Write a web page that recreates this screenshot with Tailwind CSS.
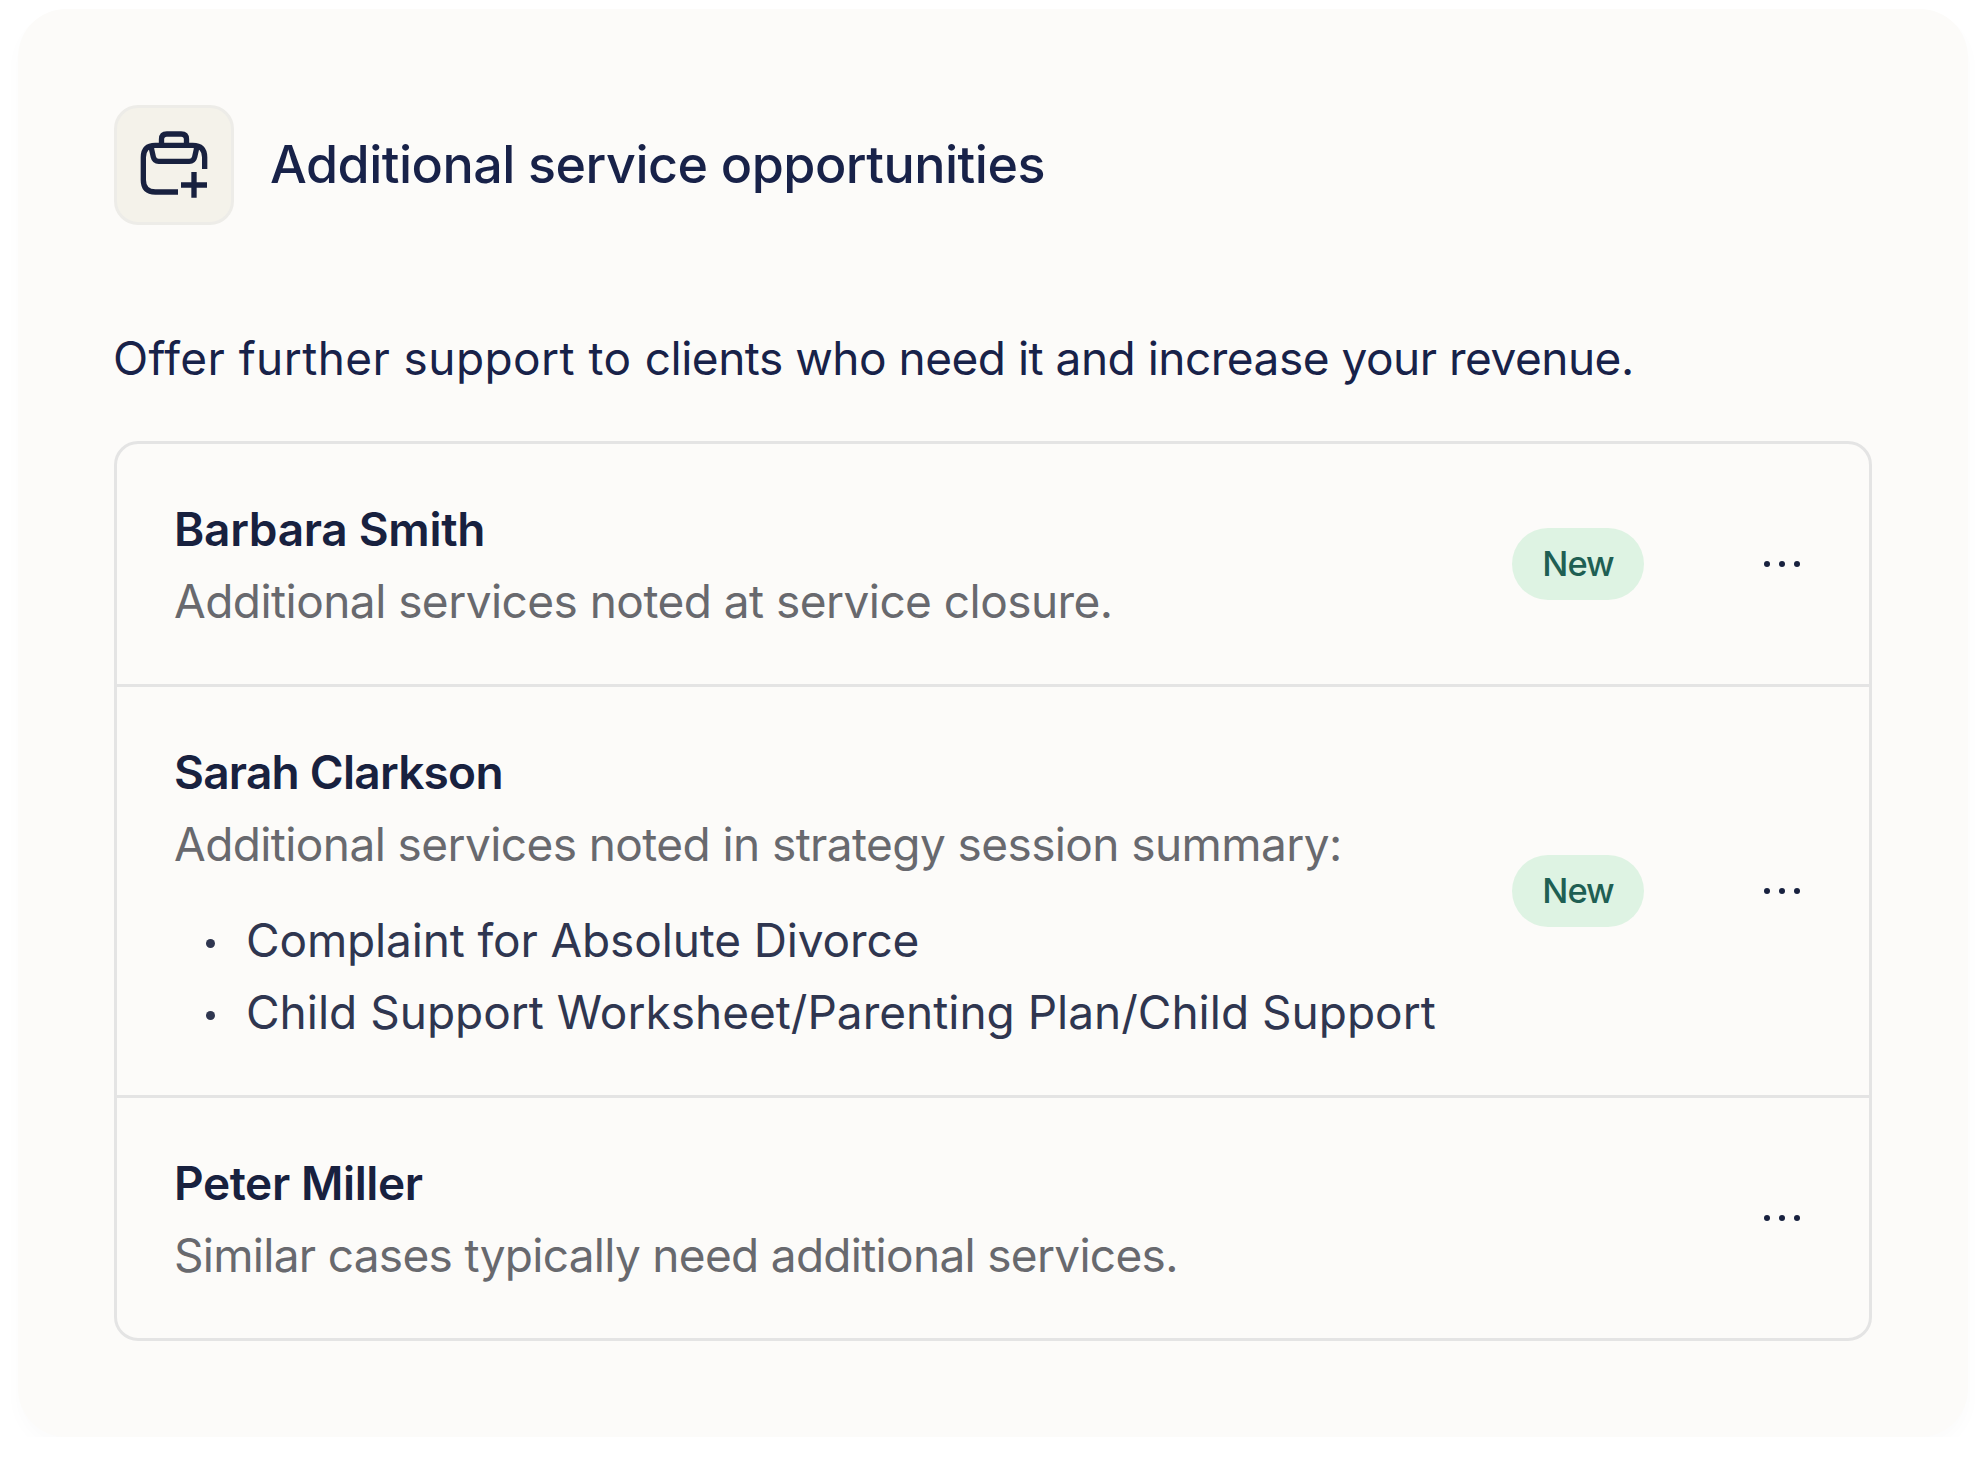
<!DOCTYPE html>
<html lang="en">
<head>
    <meta charset="UTF-8">
    <meta name="viewport" content="width=device-width, initial-scale=1.0">
    <title>Additional service opportunities</title>
    <script src="https://cdn.jsdelivr.net/npm/@tailwindcss/browser@4"></script>
</head>
<body class="bg-white font-['Inter',sans-serif] text-[46px] leading-[72px] text-[#182249]">
    <main class="mx-[18px] mt-[9px] h-[1428px] rounded-[48px] bg-[#fcfbf9] px-24 pt-24 shadow-[0_9px_18px_rgba(24,34,73,0.02)]">
        <!-- Header -->
        <header class="flex items-center gap-9">
            <div class="size-[120px] shrink-0 rounded-3xl border-3 border-[#edece8] bg-[#f4f2ea]">
                <svg class="size-full" viewBox="51 54 342 342" fill="none" stroke="#18213f" stroke-width="16">
                    <path d="M234 306H166Q130 306 130 270V202Q130 166 166 166H278Q314 166 314 202V237" />
                    <path d="M184.500 162V148Q184.500 132 200.500 132H243.500Q259.500 132 259.500 148V162" />
                    <path d="M153 170L160 201Q163 214 176 214H268Q281 214 284 201L291 170" />
                    <path d="M282 246V323M243 285H321" />
                </svg>
            </div>
            <h1 class="text-[52px] font-[450] tracking-[-0.52px] whitespace-nowrap">Additional service opportunities</h1>
        </header>

        <p class="mt-[97px] -ml-px whitespace-nowrap"><span class="tracking-[0.42px]">Offer further support to </span><span class="tracking-[-0.5px]">clients who need it and increase your revenue.</span></p>

        <!-- Clients -->
        <ul class="mt-[47px] divide-y-3 divide-[#e4e4e4] rounded-3xl border-3 border-[#e4e4e4]">
            <li class="flex h-[243px] items-center px-[57px]">
                <div class="flex-1 pt-0.5 whitespace-nowrap">
                    <h2 class="font-semibold tracking-[-0.3px] text-[#18213f]">Barbara Smith</h2>
                    <p class="tracking-[-0.54px] text-[#68696e]">Additional services noted at service closure.</p>
                </div>
                <span class="flex h-[72px] w-[132px] items-center justify-center rounded-full bg-[#def3e3] text-[34.500px] font-medium tracking-[-1px] text-[#1f5f53]">New</span>
                <button class="ml-[108px]" aria-label="More options">
                    <svg class="h-[60px] w-[60px]" viewBox="0 0 60 60" fill="#18213f">
                        <circle cx="15" cy="30" r="3" /><circle cx="30" cy="30" r="3" /><circle cx="45" cy="30" r="3" />
                    </svg>
                </button>
            </li>
            <li class="flex h-[411px] items-center px-[57px]">
                <div class="w-0 flex-1 pt-0.5 whitespace-nowrap">
                    <h2 class="font-semibold tracking-[-0.75px] text-[#18213f]">Sarah Clarkson</h2>
                    <p class="tracking-[-0.59px] text-[#68696e]">Additional services noted in strategy session summary:</p>
                    <ul class="mt-6 text-[#2f3650]">
                        <li class="flex items-center pl-8 tracking-[-0.14px]"><span class="mt-1.5 mr-[31px] size-[9px] rounded-full bg-[#2f3650]"></span>Complaint for Absolute Divorce</li>
                        <li class="flex items-center pl-8"><span class="mt-1.5 mr-[31px] size-[9px] rounded-full bg-[#2f3650]"></span>Child Support Worksheet/Parenting Plan/Child Support</li>
                    </ul>
                </div>
                <span class="flex h-[72px] w-[132px] items-center justify-center rounded-full bg-[#def3e3] text-[34.500px] font-medium tracking-[-1px] text-[#1f5f53]">New</span>
                <button class="ml-[108px]" aria-label="More options">
                    <svg class="h-[60px] w-[60px]" viewBox="0 0 60 60" fill="#18213f">
                        <circle cx="15" cy="30" r="3" /><circle cx="30" cy="30" r="3" /><circle cx="45" cy="30" r="3" />
                    </svg>
                </button>
            </li>
            <li class="flex h-[240px] items-center px-[57px]">
                <div class="flex-1 pt-0.5 whitespace-nowrap">
                    <h2 class="font-semibold tracking-[-0.4px] text-[#18213f]">Peter Miller</h2>
                    <p class="tracking-[-0.7px] text-[#68696e]">Similar cases typically need additional services.</p>
                </div>
                <button class="ml-[108px]" aria-label="More options">
                    <svg class="h-[60px] w-[60px]" viewBox="0 0 60 60" fill="#18213f">
                        <circle cx="15" cy="30" r="3" /><circle cx="30" cy="30" r="3" /><circle cx="45" cy="30" r="3" />
                    </svg>
                </button>
            </li>
        </ul>
    </main>
</body>
</html>
